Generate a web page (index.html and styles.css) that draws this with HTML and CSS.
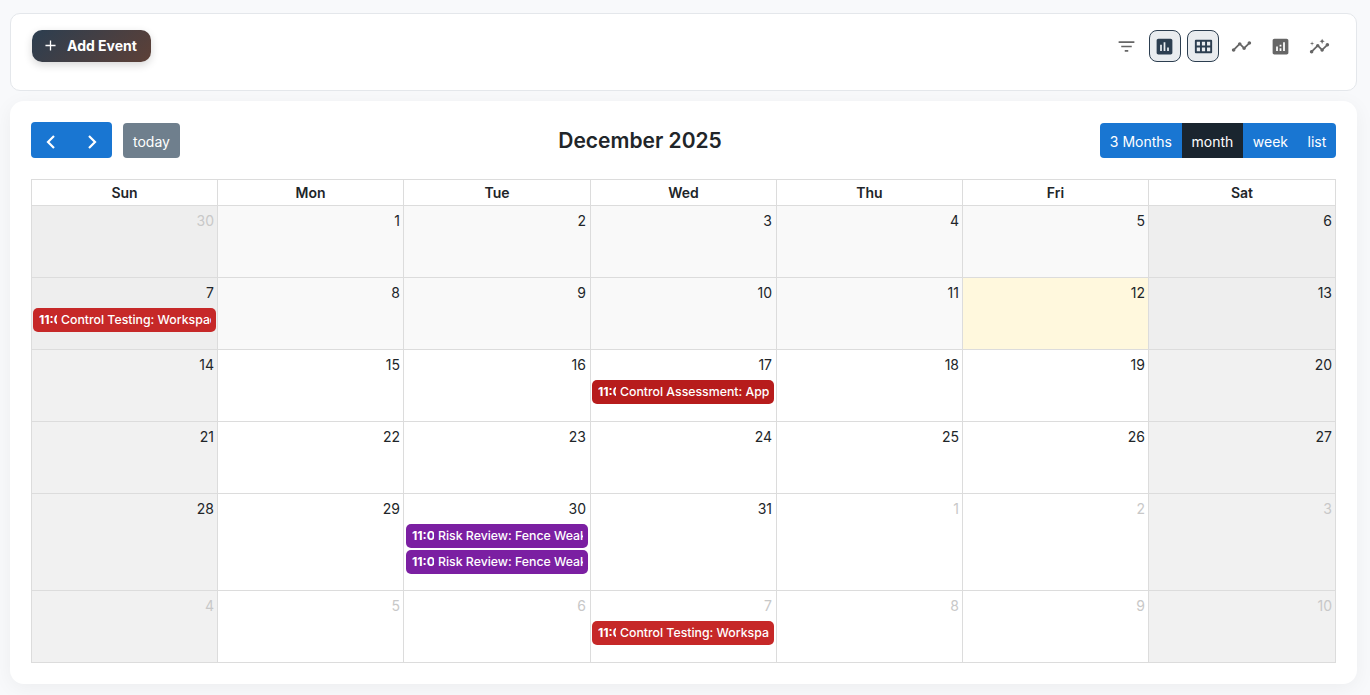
FILE: index.html
```html
<!DOCTYPE html>
<html lang="en">
<head>
  <meta charset="UTF-8">
  <title>Calendar</title>
  <link rel="stylesheet" href="styles.css">
</head>
<body>
  <div class="top-bar">
    <button class="add-button">
      <svg class="plus-icon" viewBox="0 0 12 12"><path d="M6 .5v11M.5 6h11"/></svg>
      <span>Add Event</span>
    </button>
    <div class="icon-group">
      <span class="icon-button">
        <svg class="icon filter-icon" viewBox="0 0 24 24"><path d="M3 7h18M6 12h12M10 17h4"/></svg>
      </span>
      <span class="icon-button active">
        <svg class="icon" viewBox="0 0 24 24"><path d="M19 3H5c-1.1 0-2 .9-2 2v14c0 1.1.9 2 2 2h14c1.1 0 2-.9 2-2V5c0-1.1-.9-2-2-2zM9 17H7v-7h2v7zm4 0h-2V7h2v10zm4 0h-2v-4h2v4z"/></svg>
      </span>
      <span class="icon-button active">
        <svg class="icon grid-icon" viewBox="0 0 24 24"><path fill-rule="evenodd" d="M4 5h16c.6 0 1 .4 1 1v12c0 .6-.4 1-1 1H4c-.6 0-1-.4-1-1V6c0-.6.4-1 1-1zm1 2v4h3.33V7H5zm5.33 0v4h3.34V7h-3.34zm5.34 0v4H19V7h-3.33zM5 13v4h3.33v-4H5zm5.33 0v4h3.34v-4h-3.34zm5.34 0v4H19v-4h-3.33z"/></svg>
      </span>
      <span class="icon-button">
        <svg class="icon" viewBox="0 0 24 24"><path d="M23 8c0 1.1-.9 2-2 2-.18 0-.35-.02-.51-.07l-3.56 3.55c.05.16.07.34.07.52 0 1.1-.9 2-2 2s-2-.9-2-2c0-.18.02-.36.07-.52l-2.55-2.55c-.16.05-.34.07-.52.07s-.36-.02-.52-.07l-4.55 4.56c.05.16.07.33.07.51 0 1.1-.9 2-2 2s-2-.9-2-2 .9-2 2-2c.18 0 .35.02.51.07l4.56-4.55C8.02 9.36 8 9.18 8 9c0-1.1.9-2 2-2s2 .9 2 2c0 .18-.02.36-.07.52l2.55 2.55c.16-.05.34-.07.52-.07s.36.02.52.07l3.55-3.56C19.02 8.35 19 8.18 19 8c0-1.1.9-2 2-2s2 .9 2 2z"/></svg>
      </span>
      <span class="icon-button">
        <svg class="icon" viewBox="0 0 24 24"><path d="M19 3H5c-1.1 0-2 .9-2 2v14c0 1.1.9 2 2 2h14c1.1 0 2-.9 2-2V5c0-1.1-.9-2-2-2zM9 17H7v-5h2v5zm4 0h-2v-3h2v3zm0-5h-2v-2h2v2zm4 5h-2V7h2v10z"/></svg>
      </span>
      <span class="icon-button">
        <svg class="icon" viewBox="0 0 24 24"><path d="M21 8c-1.45 0-2.26 1.44-1.93 2.51l-3.55 3.56c-.3-.09-.74-.09-1.04 0l-2.55-2.55C12.27 10.45 11.46 9 10 9c-1.45 0-2.27 1.44-1.93 2.52l-4.56 4.55C2.44 15.74 1 16.55 1 18c0 1.1.9 2 2 2 1.45 0 2.26-1.44 1.93-2.51l4.55-4.56c.3.09.74.09 1.04 0l2.55 2.55C12.73 16.55 13.54 18 15 18c1.45 0 2.27-1.44 1.93-2.52l3.56-3.55c1.07.33 2.51-.48 2.51-1.93 0-1.1-.9-2-2-2z"/><path d="M15 9l.94-2.07L18 6l-2.06-.93L15 3l-.92 2.07L12 6l2.08.93z"/><path d="M3.5 11L4 9l2-.5L4 8l-.5-2L3 8l-2 .5L3 9z"/></svg>
      </span>
    </div>
  </div>

  <div class="calendar-card">
    <div class="toolbar">
      <div class="toolbar-left">
        <div class="nav-group">
          <button class="nav-button"><svg viewBox="0 0 10 16"><path d="M8 2L2 8l6 6"/></svg></button>
          <button class="nav-button"><svg viewBox="0 0 10 16"><path d="M2 2l6 6-6 6"/></svg></button>
        </div>
        <button class="today-button">today</button>
      </div>
      <h2 class="month-title">December 2025</h2>
      <div class="view-group">
        <button class="view-button">3 Months</button>
        <button class="view-button selected">month</button>
        <button class="view-button">week</button>
        <button class="view-button">list</button>
      </div>
    </div>

    <table class="month-table">
      <colgroup>
        <col class="day-col"><col class="day-col"><col class="day-col wide"><col class="day-col"><col class="day-col"><col class="day-col"><col class="day-col wide">
      </colgroup>
      <thead>
        <tr><th>Sun</th><th>Mon</th><th>Tue</th><th>Wed</th><th>Thu</th><th>Fri</th><th>Sat</th></tr>
      </thead>
      <tbody>
        <tr class="past">
          <td class="weekend other"><div class="day-number">30</div></td>
          <td><div class="day-number">1</div></td>
          <td><div class="day-number">2</div></td>
          <td><div class="day-number">3</div></td>
          <td><div class="day-number">4</div></td>
          <td><div class="day-number">5</div></td>
          <td class="weekend"><div class="day-number">6</div></td>
        </tr>
        <tr class="past">
          <td class="weekend">
            <div class="day-number">7</div>
            <div class="event testing"><span class="event-time short">11:00</span><span class="event-title">Control Testing: Workspace Access</span></div>
          </td>
          <td><div class="day-number">8</div></td>
          <td><div class="day-number">9</div></td>
          <td><div class="day-number">10</div></td>
          <td><div class="day-number">11</div></td>
          <td class="today"><div class="day-number">12</div></td>
          <td class="weekend"><div class="day-number">13</div></td>
        </tr>
        <tr>
          <td class="weekend"><div class="day-number">14</div></td>
          <td><div class="day-number">15</div></td>
          <td><div class="day-number">16</div></td>
          <td>
            <div class="day-number">17</div>
            <div class="event assessment"><span class="event-time short">11:00</span><span class="event-title">Control Assessment: Application Review</span></div>
          </td>
          <td><div class="day-number">18</div></td>
          <td><div class="day-number">19</div></td>
          <td class="weekend"><div class="day-number">20</div></td>
        </tr>
        <tr>
          <td class="weekend"><div class="day-number">21</div></td>
          <td><div class="day-number">22</div></td>
          <td><div class="day-number">23</div></td>
          <td><div class="day-number">24</div></td>
          <td><div class="day-number">25</div></td>
          <td><div class="day-number">26</div></td>
          <td class="weekend"><div class="day-number">27</div></td>
        </tr>
        <tr>
          <td class="weekend"><div class="day-number">28</div></td>
          <td><div class="day-number">29</div></td>
          <td>
            <div class="day-number">30</div>
            <div class="event risk"><span class="event-time">11:00</span><span class="event-title">Risk Review: Fence Weakness</span></div>
            <div class="event risk"><span class="event-time">11:00</span><span class="event-title">Risk Review: Fence Weakness</span></div>
          </td>
          <td><div class="day-number">31</div></td>
          <td class="other"><div class="day-number">1</div></td>
          <td class="other"><div class="day-number">2</div></td>
          <td class="weekend other"><div class="day-number">3</div></td>
        </tr>
        <tr>
          <td class="weekend other"><div class="day-number">4</div></td>
          <td class="other"><div class="day-number">5</div></td>
          <td class="other"><div class="day-number">6</div></td>
          <td class="other">
            <div class="day-number">7</div>
            <div class="event testing"><span class="event-time short">11:00</span><span class="event-title">Control Testing: Workspace Access</span></div>
          </td>
          <td class="other"><div class="day-number">8</div></td>
          <td class="other"><div class="day-number">9</div></td>
          <td class="weekend other"><div class="day-number">10</div></td>
        </tr>
      </tbody>
    </table>
  </div>
</body>
</html>
```

FILE: styles.css
```css
* {
  margin: 0;
  padding: 0;
  box-sizing: border-box;
}

html,
body {
  height: 695px;
  overflow: hidden;
}

body {
  font-family: 'Inter', 'Liberation Sans', sans-serif;
  background: #f8f9fb;
  color: #212529;
  padding: 13px 13px 0 10px;
}

button {
  font-family: inherit;
  border: none;
  color: #fff;
}

.top-bar {
  height: 78px;
  background: #fff;
  border: 1px solid #e4e7eb;
  border-radius: 10px;
  padding: 16px 21px 0;
  display: flex;
  justify-content: space-between;
  align-items: flex-start;
}

.add-button {
  height: 32px;
  width: 119px;
  display: flex;
  align-items: center;
  gap: 11px;
  padding: 0 0 1px 13px;
  font-size: 14px;
  font-weight: 700;
  border-radius: 10px;
  background: linear-gradient(135deg, #2c3e50, #5d4037);
  box-shadow: 0 3px 8px rgba(0, 0, 0, 0.16);
}

.plus-icon {
  width: 11px;
  height: 11px;
  fill: none;
  stroke: #fff;
  stroke-width: 1.4;
}

.icon-group {
  display: flex;
  gap: 6.6px;
}

.icon-button {
  width: 32px;
  height: 32px;
  display: flex;
  align-items: center;
  justify-content: center;
  border: 1px solid transparent;
  border-radius: 8px;
  color: #666;
}

.icon-button.active {
  background: #e9ecef;
  border-color: #2c3e50;
  color: #2c3e50;
}

.icon {
  width: 21px;
  height: 21px;
  fill: currentColor;
}

.grid-icon {
  width: 23px;
  height: 23px;
}

.filter-icon {
  fill: none;
  stroke: currentColor;
  stroke-width: 1.8;
}

.calendar-card {
  margin-top: 10px;
  height: 583px;
  background: #fff;
  border-radius: 14px;
  box-shadow: 0 4px 20px rgba(0, 0, 0, 0.05);
  padding: 21px 21px 0;
}

.toolbar {
  display: flex;
  justify-content: space-between;
  align-items: center;
  height: 36px;
  margin-bottom: 21px;
}

.toolbar-left {
  display: flex;
  align-items: flex-end;
  gap: 11px;
  height: 36px;
}

.nav-group {
  display: flex;
  width: 81px;
  height: 36px;
  background: #1976d2;
  border-radius: 4px;
}

.nav-button {
  flex: 1;
  background: none;
  display: flex;
  align-items: center;
  justify-content: center;
  padding-top: 3px;
}

.nav-button svg {
  width: 10px;
  height: 16px;
  fill: none;
  stroke: #fff;
  stroke-width: 2.2;
}

.today-button {
  width: 57px;
  height: 35px;
  padding-top: 1px;
  background: #6f7f8d;
  border-radius: 4px;
  font-size: 14px;
}

.month-title {
  font-size: 21px;
  font-weight: 600;
  line-height: 1.2;
  padding-top: 2px;
  color: #212529;
}

.view-group {
  display: flex;
  height: 35px;
  margin-top: 1px;
  border-radius: 4px;
  overflow: hidden;
  background: #1976d2;
}

.view-button {
  height: 35px;
  padding: 1px 9.75px 0;
  background: none;
  font-size: 14px;
}

.view-button.selected {
  background: #1a252f;
}

.month-table {
  width: 1305px;
  table-layout: fixed;
  border-collapse: collapse;
  font-size: 14px;
}

.day-col {
  width: 186px;
}

.day-col.wide {
  width: 187px;
}

.month-table th,
.month-table td {
  border: 1px solid #dcdcdc;
}

.month-table th {
  height: 26px;
  font-weight: 600;
  font-size: 14px;
  background: #fff;
}

.month-table td {
  height: 72px;
  vertical-align: top;
  padding: 0 1px 14px;
}

/* tue and wed sit a pixel short of the others */
.month-table td:nth-child(3),
.month-table td:nth-child(4) {
  padding-right: 2px;
}

.past td {
  background: #f9f9f9;
}

.month-table td.weekend {
  background: #f1f1f1;
}

.past td.weekend {
  background: #eeeeee;
}

.month-table td.today {
  background: #fff8dd;
}

.day-number {
  height: 30px;
  padding: 6px 2px 0 0;
  line-height: 17px;
  text-align: right;
}

.other .day-number {
  color: #c8c8c8;
}

.event {
  height: 24px;
  margin-bottom: 2px;
  padding: 0 5px 2px 6px;
  display: flex;
  align-items: center;
  gap: 4px;
  border-radius: 5px;
  color: #fff;
  font-size: 12.3px;
  font-weight: 500;
  white-space: nowrap;
  overflow: hidden;
}

.event.testing {
  background: #c62828;
}

.event.assessment {
  background: #b71c1c;
}

.event.risk {
  background: #7b1fa2;
  margin-left: 1px;
}

.event-time {
  width: 22px;
  flex-shrink: 0;
  overflow: hidden;
  font-weight: 700;
}

.event-time.short {
  width: 18px;
}

.event-title {
  flex: 1;
  min-width: 0;
  overflow: hidden;
}
```
